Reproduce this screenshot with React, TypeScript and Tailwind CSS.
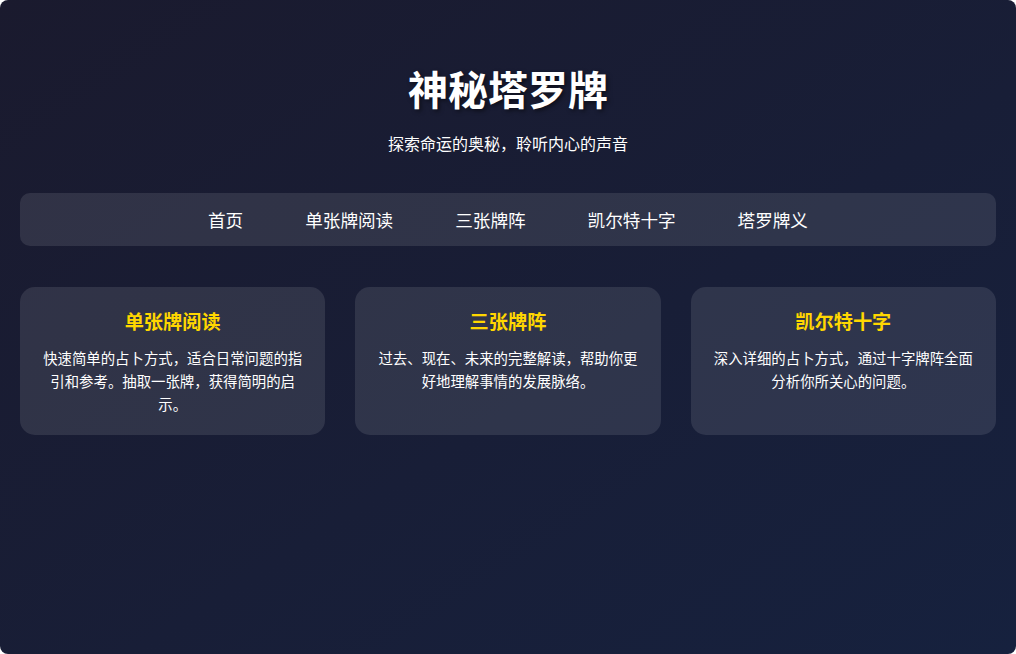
const navItems = ['首页', '单张牌阅读', '三张牌阵', '凯尔特十字', '塔罗牌义'];

const features = [
  {
    title: '单张牌阅读',
    desc: '快速简单的占卜方式，适合日常问题的指引和参考。抽取一张牌，获得简明的启示。',
  },
  {
    title: '三张牌阵',
    desc: '过去、现在、未来的完整解读，帮助你更好地理解事情的发展脉络。',
  },
  {
    title: '凯尔特十字',
    desc: '深入详细的占卜方式，通过十字牌阵全面分析你所关心的问题。',
  },
];

export default function App() {
  return (
    <div className="bg-white h-[654px] font-['Noto_Sans_CJK_SC','Noto_Sans',sans-serif]">
      <div className="h-full rounded-lg bg-gradient-to-br from-[#1a1a2e] to-[#16213e] px-5 text-white">
        <header className="pt-[58px] text-center">
          <h1 className="text-[40px] leading-[60px] font-bold [text-shadow:2px_2px_4px_rgba(0,0,0,0.5)]">
            神秘塔罗牌
          </h1>
          <p className="mt-[13px] text-[16px] leading-6">探索命运的奥秘，聆听内心的声音</p>
        </header>

        <nav className="mt-[38px] h-[53px] flex items-center justify-center gap-[62px] rounded-[10px] bg-white/10">
          {navItems.map((item) => (
            <a key={item} href="#" className="text-[17.6px] leading-[26px]">
              {item}
            </a>
          ))}
        </nav>

        <div className="mt-[41px] grid grid-cols-3 gap-[30px]">
          {features.map((f) => (
            <div key={f.title} className="h-[148px] rounded-[15px] bg-white/10 p-5 text-center">
              <h3 className="text-[19.2px] leading-[28.8px] font-bold text-[#ffd700]">{f.title}</h3>
              <p className="mt-[10px] text-[14.4px] leading-[23px]">{f.desc}</p>
            </div>
          ))}
        </div>
      </div>
    </div>
  );
}
